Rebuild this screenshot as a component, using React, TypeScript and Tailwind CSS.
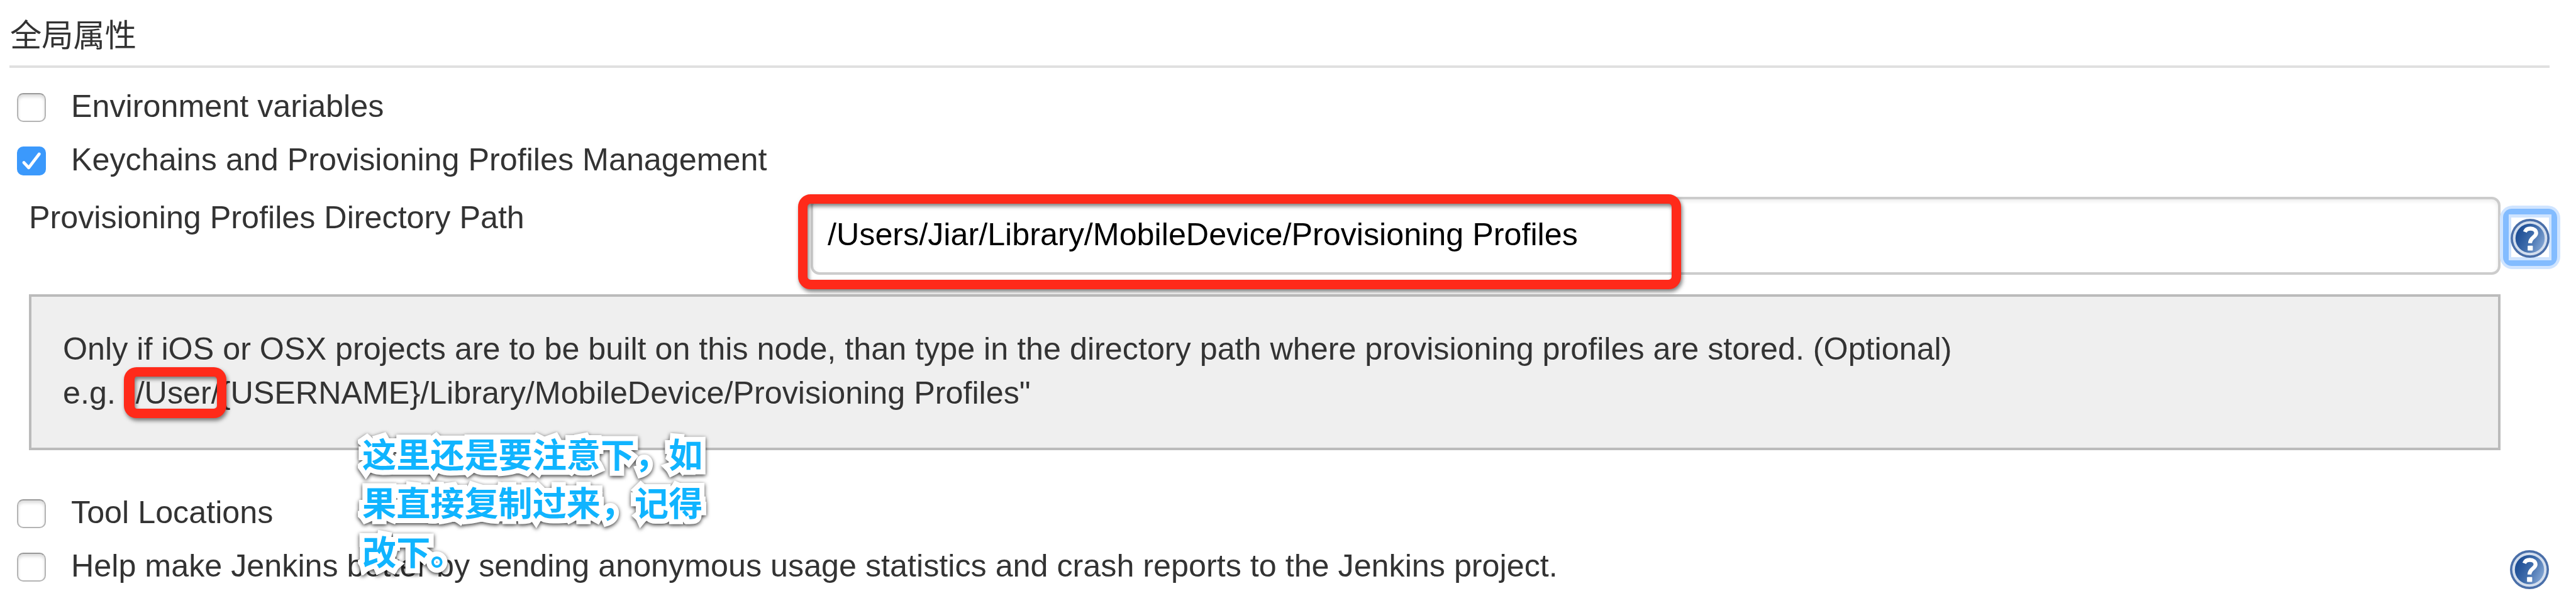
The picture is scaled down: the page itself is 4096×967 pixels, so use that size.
import React from "react";

function HelpIcon({ id }: { id: string }) {
  return (
    <svg viewBox="0 0 64 64" className="block h-[62px] w-[62px]">
      <defs>
        <linearGradient id={id} x1="0.1" y1="0.3" x2="1" y2="0.75">
          <stop offset="0" stopColor="#1f4f96" />
          <stop offset="0.45" stopColor="#3f6cab" />
          <stop offset="1" stopColor="#86a8d6" />
        </linearGradient>
      </defs>
      <circle cx="32" cy="32" r="32" fill="#4a6fa9" />
      <circle cx="32" cy="32" r="28.2" fill="#d3deee" />
      <circle cx="32" cy="32" r="24" fill={`url(#${id})`} />
      <path
        d="M23.5 21.5C25 17.5 28.5 16 32.5 16C38 16 42 19 42 23.5C42 30 32 30.5 32 40"
        fill="none"
        stroke="#fff"
        strokeWidth="6.5"
      />
      <rect x="28" y="44" width="8.5" height="8" rx="1" fill="#fff" />
    </svg>
  );
}

function Checkbox({ checked = false }: { checked?: boolean }) {
  if (checked) {
    return (
      <span className="block h-[46px] w-[46px] shrink-0 rounded-[10px] bg-[#3b99fc]">
        <svg viewBox="0 0 48 48" className="block h-full w-full" fill="none">
          <path d="M11.5 26.7L19.5 35.2L36.8 12.5" stroke="#fff" strokeWidth="5" strokeLinecap="round" strokeLinejoin="round" />
        </svg>
      </span>
    );
  }
  return (
    <span className="block h-[46px] w-[46px] shrink-0 rounded-[10px] border-2 border-[#b4b4b4] border-t-[#999] bg-white shadow-[inset_0_4px_5px_rgba(0,0,0,0.14)]" />
  );
}

function OptionRow({ label, checked, help }: { label: string; checked?: boolean; help?: boolean }) {
  return (
    <div className="flex h-[85px] items-center pl-[27px]">
      <Checkbox checked={checked} />
      <span className="whitespace-nowrap pb-[3px] pl-[40px]">{label}</span>
      {help && (
        <span className="ml-auto mr-[43px] pt-[8px]">
          <HelpIcon id="help-usage" />
        </span>
      )}
    </div>
  );
}

export default function App() {
  return (
    <div className="relative h-[967px] w-[4096px] overflow-hidden bg-white font-['Liberation_Sans','Noto_Sans_CJK_SC',sans-serif] text-[50.28px] leading-[70px] text-[#333]">
      <h2 className="ml-[15px] mr-[42px] flex h-[108px] items-center border-b-4 border-[#e0e0e0] pl-px pt-[9px]">
        全局属性
      </h2>

      <div className="pt-[20px]">
        <OptionRow label="Environment variables" />
        <OptionRow label="Keychains and Provisioning Profiles Management" checked />
      </div>

      <div className="flex h-[170px] items-start pl-[46px] pt-[15px]">
        <label className="-mt-[2px] w-[1243px] shrink-0 whitespace-nowrap">Provisioning Profiles Directory Path</label>
        <div className="flex h-[124px] w-[2687px] shrink-0 items-center rounded-[14px] border-4 border-[#ccc] bg-white pb-[4px] pl-[23px] text-black shadow-[inset_0_3px_6px_rgba(0,0,0,0.08)]">
          /Users/Jiar/Library/MobileDevice/Provisioning Profiles
        </div>
        <div className="-ml-px mt-[14px] flex h-[101px] w-[96px] shrink-0 items-center justify-center rounded-[20px] bg-[#cfe4ff]">
          <div className="flex h-[91px] w-[86px] items-center justify-center rounded-[14px] bg-[#83bcff]">
            <div className="flex h-[73px] w-[68px] items-center justify-center bg-[#cfe4ff]">
              <div className="flex h-[63px] w-[60px] items-center justify-center bg-white">
                <div className="shrink-0 pt-[3px]">
                  <HelpIcon id="help-path" />
                </div>
              </div>
            </div>
          </div>
        </div>
      </div>

      <div className="ml-[46px] h-[248px] w-[3930px] border-4 border-[#bbb] bg-[#efefef] pl-[50px] pt-[48px] leading-[69.6px]">
        <p className="whitespace-nowrap">
          Only if iOS or OSX projects are to be built on this node, than type in the directory path where provisioning profiles are stored. (Optional)
        </p>
        <p className="whitespace-nowrap">e.g. "/User/{"{USERNAME}"}/Library/MobileDevice/Provisioning Profiles"</p>
      </div>

      <div className="pt-[58px]">
        <OptionRow label="Tool Locations" />
        <OptionRow label="Help make Jenkins better by sending anonymous usage statistics and crash reports to the Jenkins project." help />
      </div>

      <div className="absolute left-[1269px] top-[309px] h-[151px] w-[1404px] rounded-[20px] border-[15px] border-[#ff2a1a] drop-shadow-[2px_4px_3px_rgba(0,0,0,0.5)]" />
      <div className="absolute left-[197px] top-[584px] h-[81px] w-[163px] rounded-[20px] border-[15px] border-l-[17px] border-[#ff2a1a] drop-shadow-[2px_4px_3px_rgba(0,0,0,0.5)]" />
      <div className="absolute left-[576px] top-[682px] whitespace-nowrap font-['Noto_Sans_CJK_SC',sans-serif] text-[54.15px] font-bold leading-[77.35px] text-[#10b4ff] drop-shadow-[0_2px_3px_rgba(0,0,0,0.8)] [-webkit-text-stroke:16px_white] [paint-order:stroke_fill] [stroke-linejoin:round]">
        <div>这里还是要注意下，如</div>
        <div>果直接复制过来，记得</div>
        <div>改下。</div>
      </div>
    </div>
  );
}
